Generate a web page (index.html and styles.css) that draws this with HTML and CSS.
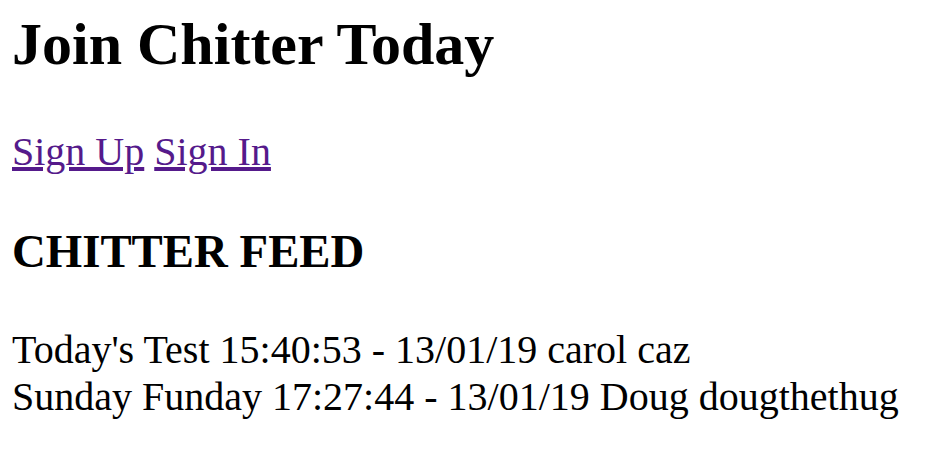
FILE: index.html
```html
<!DOCTYPE html>
<html>
<head>
<meta charset="utf-8">
<link rel="stylesheet" href="styles.css">
</head>
<body>
<h1 class="title">Join Chitter Today</h1>
<p class="nav"><a href="#">Sign Up</a> <a href="#">Sign In</a></p>
<h2 class="feed-title">CHITTER FEED</h2>
<div class="feed">
<div class="peep">Today's Test 15:40:53 - 13/01/19 carol caz</div>
<div class="peep">Sunday Funday 17:27:44 - 13/01/19 Doug dougthethug</div>
</div>
</body>
</html>
```
FILE: styles.css
```css
html, body { background: #fff; }
body {
  margin: 10px 12px;
  font-family: "Liberation Serif", "Times New Roman", serif;
  font-size: 40px;
  color: #000;
}
.title { font-size: 60px; font-weight: bold; margin: 0 0 49px; }
.nav { margin: 0 0 49px; }
.nav a { color: #551a8b; text-decoration: underline; }
.feed-title { font-size: 46.8px; font-weight: bold; margin: 0 0 48px; }
.feed { margin: 0; }
```
